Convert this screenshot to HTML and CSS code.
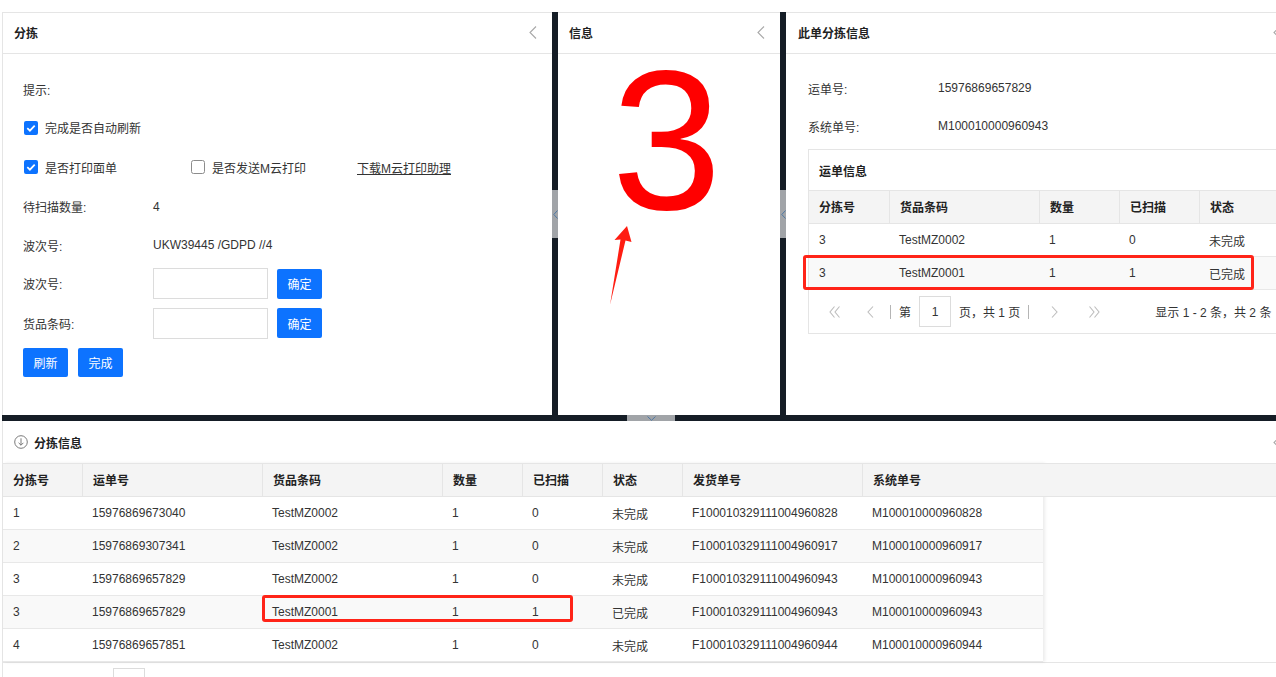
FILE: index.html
```html
<!DOCTYPE html>
<html lang="zh-CN">
<head>
<meta charset="utf-8">
<title>分拣</title>
<link rel="stylesheet" href="styles.css">
</head>
<body>
<div class="app">
  <div class="top">
    <section class="panel p-left">
      <div class="phead"><span>分拣</span><svg class="chev" width="8" height="13" viewBox="0 0 8 13"><path d="M7 0.5 L1 6.5 L7 12.5" /></svg></div>
      <div class="lbody">
        <div class="frow h38"><span class="lbl">提示:</span></div>
        <div class="frow h39">
          <label class="chk"><svg width="14" height="14" viewBox="0 0 14 14"><rect width="14" height="14" rx="2" fill="#0d73ff"/><path d="M3.3 7.2 L5.9 9.7 L10.7 4.6" fill="none" stroke="#fff" stroke-width="1.7"/></svg>完成是否自动刷新</label>
        </div>
        <div class="frow h40">
          <label class="chk w168"><svg width="14" height="14" viewBox="0 0 14 14"><rect width="14" height="14" rx="2" fill="#0d73ff"/><path d="M3.3 7.2 L5.9 9.7 L10.7 4.6" fill="none" stroke="#fff" stroke-width="1.7"/></svg>是否打印面单</label>
          <label class="chk w166 off"><svg width="14" height="14" viewBox="0 0 14 14"><rect x="0.5" y="0.5" width="13" height="13" rx="2" fill="#fff" stroke="#8c8c8c"/></svg>是否发送M云打印</label>
          <a class="dl" href="#">下载M云打印助理</a>
        </div>
        <div class="frow h39"><span class="lbl">待扫描数量:</span><span>4</span></div>
        <div class="frow h38"><span class="lbl">波次号:</span><span>UKW39445 /GDPD //4</span></div>
        <div class="frow h39"><span class="lbl">波次号:</span><input class="inp" type="text"><button class="btn">确定</button></div>
        <div class="frow h40"><span class="lbl">货品条码:</span><input class="inp" type="text"><button class="btn">确定</button></div>
        <div class="btnrow"><button class="btn btn2">刷新</button><button class="btn btn2">完成</button></div>
      </div>
    </section>
    <div class="vsplit"><div class="vhandle"><svg width="5" height="9" viewBox="0 0 5 9"><path d="M4.5 0.5 L0.8 4.5 L4.5 8.5"/></svg></div></div>
    <section class="panel p-mid">
      <div class="phead"><span>信息</span><svg class="chev" width="8" height="13" viewBox="0 0 8 13"><path d="M7 0.5 L1 6.5 L7 12.5" /></svg></div>
      <div class="bignum">3</div>
      <svg class="arrow" width="40" height="90" viewBox="0 0 40 90"><polygon points="27,5 31.5,21 25.5,19.5 10,84 20.5,18.5 14.5,19" fill="#ff1d12"/></svg>
    </section>
    <div class="vsplit"><div class="vhandle"><svg width="5" height="9" viewBox="0 0 5 9"><path d="M4.5 0.5 L0.8 4.5 L4.5 8.5"/></svg></div></div>
    <section class="panel p-right">
      <div class="phead pr"><span>此单分拣信息</span><svg class="chev" width="8" height="13" viewBox="0 0 8 13"><path d="M7 0.5 L1 6.5 L7 12.5" /></svg></div>
      <div class="rbody">
        <div class="frow h38"><span class="lbl">运单号:</span><span>15976869657829</span></div>
        <div class="frow h38"><span class="lbl">系统单号:</span><span>M100010000960943</span></div>
        <div class="box">
          <div class="box-title">运单信息</div>
          <table class="tbl tbl-r">
            <thead>
              <tr><th class="c80">分拣号</th><th class="c150">货品条码</th><th class="c80">数量</th><th class="c80">已扫描</th><th>状态</th></tr>
            </thead>
            <tbody>
              <tr><td>3</td><td>TestMZ0002</td><td>1</td><td>0</td><td>未完成</td></tr>
              <tr class="alt"><td>3</td><td>TestMZ0001</td><td>1</td><td>1</td><td>已完成</td></tr>
            </tbody>
          </table>
          <div class="pager">
            <svg class="pi dbl" width="11" height="14" viewBox="0 0 11 14"><path d="M5.5 1.5 L1 7 L5.5 12.5 M10.5 1.5 L6 7 L10.5 12.5"/></svg>
            <svg class="pi sgl" width="7" height="14" viewBox="0 0 7 14"><path d="M6 1.5 L1 7 L6 12.5"/></svg>
            <span class="psep s1"></span>
            <span class="pt1">第</span>
            <span class="pbox">1</span>
            <span class="pt2">页，共 1 页</span>
            <span class="psep s2"></span>
            <svg class="pi sgl2" width="7" height="14" viewBox="0 0 7 14"><path d="M1 1.5 L6 7 L1 12.5"/></svg>
            <svg class="pi dbl2" width="11" height="14" viewBox="0 0 11 14"><path d="M0.5 1.5 L5 7 L0.5 12.5 M5.5 1.5 L10 7 L5.5 12.5"/></svg>
            <span class="pinfo">显示 1 - 2 条，共 2 条</span>
          </div>
          <div class="mark mark-r"></div>
        </div>
      </div>
    </section>
  </div>
  <div class="hsplit"><div class="hhandle"><svg width="9" height="5" viewBox="0 0 9 5"><path d="M0.5 0.5 L4.5 4.3 L8.5 0.5"/></svg></div></div>
  <section class="bottom">
    <div class="bhead">
      <svg width="14" height="14" viewBox="0 0 14 14" class="dicon"><circle cx="7" cy="7" r="6.3"/><path d="M7 3.3 V10.2 M4.6 7.8 L7 10.2 L9.4 7.8"/></svg>
      <span>分拣信息</span>
      <svg class="chev bchev" width="8" height="13" viewBox="0 0 8 13"><path d="M7 0.5 L1 6.5 L7 12.5" /></svg>
    </div>
    <div class="grid">
      <table class="tbl tbl-b">
        <thead>
          <tr><th class="c79">分拣号</th><th class="c180">运单号</th><th class="c180">货品条码</th><th class="c80">数量</th><th class="c80">已扫描</th><th class="c80">状态</th><th class="c180">发货单号</th><th class="c181">系统单号</th></tr>
        </thead>
        <tbody>
          <tr><td>1</td><td>15976869673040</td><td>TestMZ0002</td><td>1</td><td>0</td><td>未完成</td><td>F100010329111004960828</td><td>M100010000960828</td></tr>
          <tr class="alt"><td>2</td><td>15976869307341</td><td>TestMZ0002</td><td>1</td><td>0</td><td>未完成</td><td>F100010329111004960917</td><td>M100010000960917</td></tr>
          <tr><td>3</td><td>15976869657829</td><td>TestMZ0002</td><td>1</td><td>0</td><td>未完成</td><td>F100010329111004960943</td><td>M100010000960943</td></tr>
          <tr class="alt"><td>3</td><td>15976869657829</td><td>TestMZ0001</td><td>1</td><td>1</td><td>已完成</td><td>F100010329111004960943</td><td>M100010000960943</td></tr>
          <tr><td>4</td><td>15976869657851</td><td>TestMZ0002</td><td>1</td><td>0</td><td>未完成</td><td>F100010329111004960944</td><td>M100010000960944</td></tr>
        </tbody>
      </table>
      <div class="filler"><div class="fhead"></div></div>
      <div class="mark mark-b"></div>
    </div>
    <div class="pager bpager">
      <svg class="pi dbl" width="11" height="14" viewBox="0 0 11 14"><path d="M5.5 1.5 L1 7 L5.5 12.5 M10.5 1.5 L6 7 L10.5 12.5"/></svg>
      <svg class="pi sgl" width="7" height="14" viewBox="0 0 7 14"><path d="M6 1.5 L1 7 L6 12.5"/></svg>
      <span class="psep s1"></span>
      <span class="pt1">第</span>
      <span class="pbox">1</span>
      <span class="pt2">页，共 1 页</span>
      <span class="psep s2"></span>
      <svg class="pi sgl2" width="7" height="14" viewBox="0 0 7 14"><path d="M1 1.5 L6 7 L1 12.5"/></svg>
      <svg class="pi dbl2" width="11" height="14" viewBox="0 0 11 14"><path d="M0.5 1.5 L5 7 L0.5 12.5 M5.5 1.5 L10 7 L5.5 12.5"/></svg>
    </div>
  </section>
</div>
</body>
</html>
```

FILE: styles.css
```css
html, body {
  margin: 0;
  padding: 0;
  background: #fff;
  overflow: hidden;
}
body {
  font-family: "Liberation Sans", "Noto Sans CJK SC", sans-serif;
  font-size: 12px;
  color: #333;
}
.app {
  width: 1298px;
  padding: 12px 0 0 2px;
}
.top {
  display: flex;
  height: 403px;
}
.panel {
  background: #fff;
  border-top: 1px solid #e5e5e5;
  box-sizing: border-box;
  display: flex;
  flex-direction: column;
  position: relative;
  flex: none;
}
.p-left { width: 550px; border-left: 1px solid #e5e5e5; }
.p-mid { width: 222px; }
.p-right { width: 510px; }

.phead {
  height: 40px;
  box-sizing: border-box;
  flex: none;
  border-bottom: 1px solid #e5e5e5;
  display: flex;
  align-items: center;
  justify-content: space-between;
  padding: 0 15px 2px 11px;
  font-weight: bold;
  color: #222;
}
.phead.pr { padding-left: 12px; }
.phead { height: 41px; }
.chev path {
  fill: none;
  stroke: #a8a8a8;
  stroke-width: 1.1;
}

.vsplit {
  width: 6px;
  flex: none;
  background: #151d26;
}
.vhandle {
  margin-top: 178px;
  height: 48px;
  background: #a1a4a8;
  display: flex;
  align-items: center;
  justify-content: center;
}
.vhandle path, .hhandle path {
  fill: none;
  stroke: #4f78a3;
  stroke-width: 1;
}
.hsplit {
  height: 6px;
  background: #151d26;
}
.hhandle {
  margin-left: 625px;
  width: 48px;
  height: 6px;
  background: #a1a4a8;
  display: flex;
  justify-content: center;
  align-items: flex-end;
}

/* left form */
.lbody {
  padding: 16px 0 0 20px;
}
.frow {
  display: flex;
  align-items: center;
}
.h38 { height: 38px; }
.h39 { height: 39px; }
.h40 { height: 40px; }
.lbl {
  width: 130px;
  flex: none;
}
.chk {
  display: flex;
  align-items: center;
  gap: 7px;
  padding-left: 1px;
  box-sizing: border-box;
}
.chk.off { padding-left: 0; }
.w168 { width: 168px; }
.w166 { width: 166px; }
.dl {
  color: #333;
  text-decoration: underline;
}
.inp {
  width: 115px;
  height: 31px;
  box-sizing: border-box;
  border: 1px solid #dcdcdc;
  margin: 0;
  padding: 0 6px;
  font: inherit;
  outline: none;
}
.btn {
  margin-left: 9px;
  width: 45px;
  height: 30px;
  border: 0;
  padding: 0;
  border-radius: 2px;
  background: #0d73ff;
  color: #fff;
  font-family: inherit;
  font-size: 12px;
}
.btnrow {
  display: flex;
  gap: 10px;
  margin-top: 5px;
}
.btn2 {
  margin-left: 0;
  height: 29px;
}

/* middle */
.bignum {
  font-family: "Liberation Sans", sans-serif;
  font-size: 198px;
  line-height: 150px;
  color: #ff0000;
  text-align: center;
  padding: 12px 5px 0 0;
}
.arrow {
  position: absolute;
  left: 42px;
  top: 208px;
}

/* right */
.rbody {
  padding: 15px 0 0 22px;
}
.box {
  margin-top: 4px;
  border: 1px solid #e5e5e5;
  position: relative;
}
.box-title {
  height: 40px;
  display: flex;
  align-items: center;
  padding-left: 10px;
  font-weight: bold;
  color: #222;
}

/* tables */
.tbl {
  border-collapse: separate;
  border-spacing: 0;
  table-layout: fixed;
}
.tbl th, .tbl td {
  box-sizing: border-box;
  padding: 0 10px;
  text-align: left;
  vertical-align: middle;
  white-space: nowrap;
  overflow: hidden;
}
.tbl th {
  height: 34px;
  padding-bottom: 2px;
  background: #f4f4f4;
  border-top: 1px solid #e5e5e5;
  border-bottom: 1px solid #e5e5e5;
  font-weight: bold;
  color: #222;
}
.tbl th + th { border-left: 1px solid #e5e5e5; }
.tbl td {
  height: 33px;
  border-bottom: 1px solid #e8e8e8;
  color: #333;
}
.tbl tr.alt td { background: #f9f9f9; }
.tbl-r { width: 100%; }
.c79 { width: 79px; }
.c80 { width: 80px; }
.c150 { width: 150px; }
.c180 { width: 180px; }
.c181 { width: 181px; }

/* pager */
.pager {
  display: flex;
  align-items: center;
  padding: 6px 0 6px 20px;
  white-space: nowrap;
}
.pi path {
  fill: none;
  stroke: #bdbdbd;
  stroke-width: 1.1;
}
.dbl { margin-right: 27px; }
.sgl { margin-right: 16px; }
.psep {
  width: 1px;
  height: 14px;
  background: #b5b5b5;
}
.s1 { margin-right: 8px; }
.pt1 { margin-right: 8px; }
.pbox {
  width: 32px;
  height: 31px;
  box-sizing: border-box;
  border: 1px solid #dcdcdc;
  display: flex;
  align-items: center;
  justify-content: center;
  margin-right: 8px;
}
.pt2 { margin-right: 8px; }
.s2 { margin-right: 22px; }
.sgl2 { margin-right: 31px; }
.pinfo { margin-left: 55px; }

/* annotations */
.mark {
  position: absolute;
  border: 3px solid #ff2418;
  border-radius: 3px;
  box-sizing: border-box;
}
.mark-r {
  left: -6px;
  top: 105px;
  width: 451px;
  height: 35px;
}
.mark-b {
  left: 259px;
  top: 132px;
  width: 311px;
  height: 27px;
}

/* bottom */
.bottom {
  border-left: 1px solid #e5e5e5;
  background: #fff;
}
.bhead {
  height: 42px;
  display: flex;
  align-items: center;
  gap: 6px;
  padding: 0 19px 0 11px;
  font-weight: bold;
  color: #222;
}
.dicon circle, .dicon path {
  fill: none;
  stroke: #7a7a7a;
  stroke-width: 1;
}
.bchev { margin-left: auto; }
.grid {
  display: flex;
  position: relative;
}
.tbl-b {
  width: 1040px;
  flex: none;
  box-shadow: 2px 0 3px rgba(0, 0, 0, 0.08);
}
.filler { flex: 1; }
.fhead {
  height: 34px;
  box-sizing: border-box;
  background: #f4f4f4;
  border-top: 1px solid #e5e5e5;
  border-bottom: 1px solid #e5e5e5;
}
.bpager {
  border-top: 1px solid #e5e5e5;
  padding: 5px 0 6px 20px;
}
```
